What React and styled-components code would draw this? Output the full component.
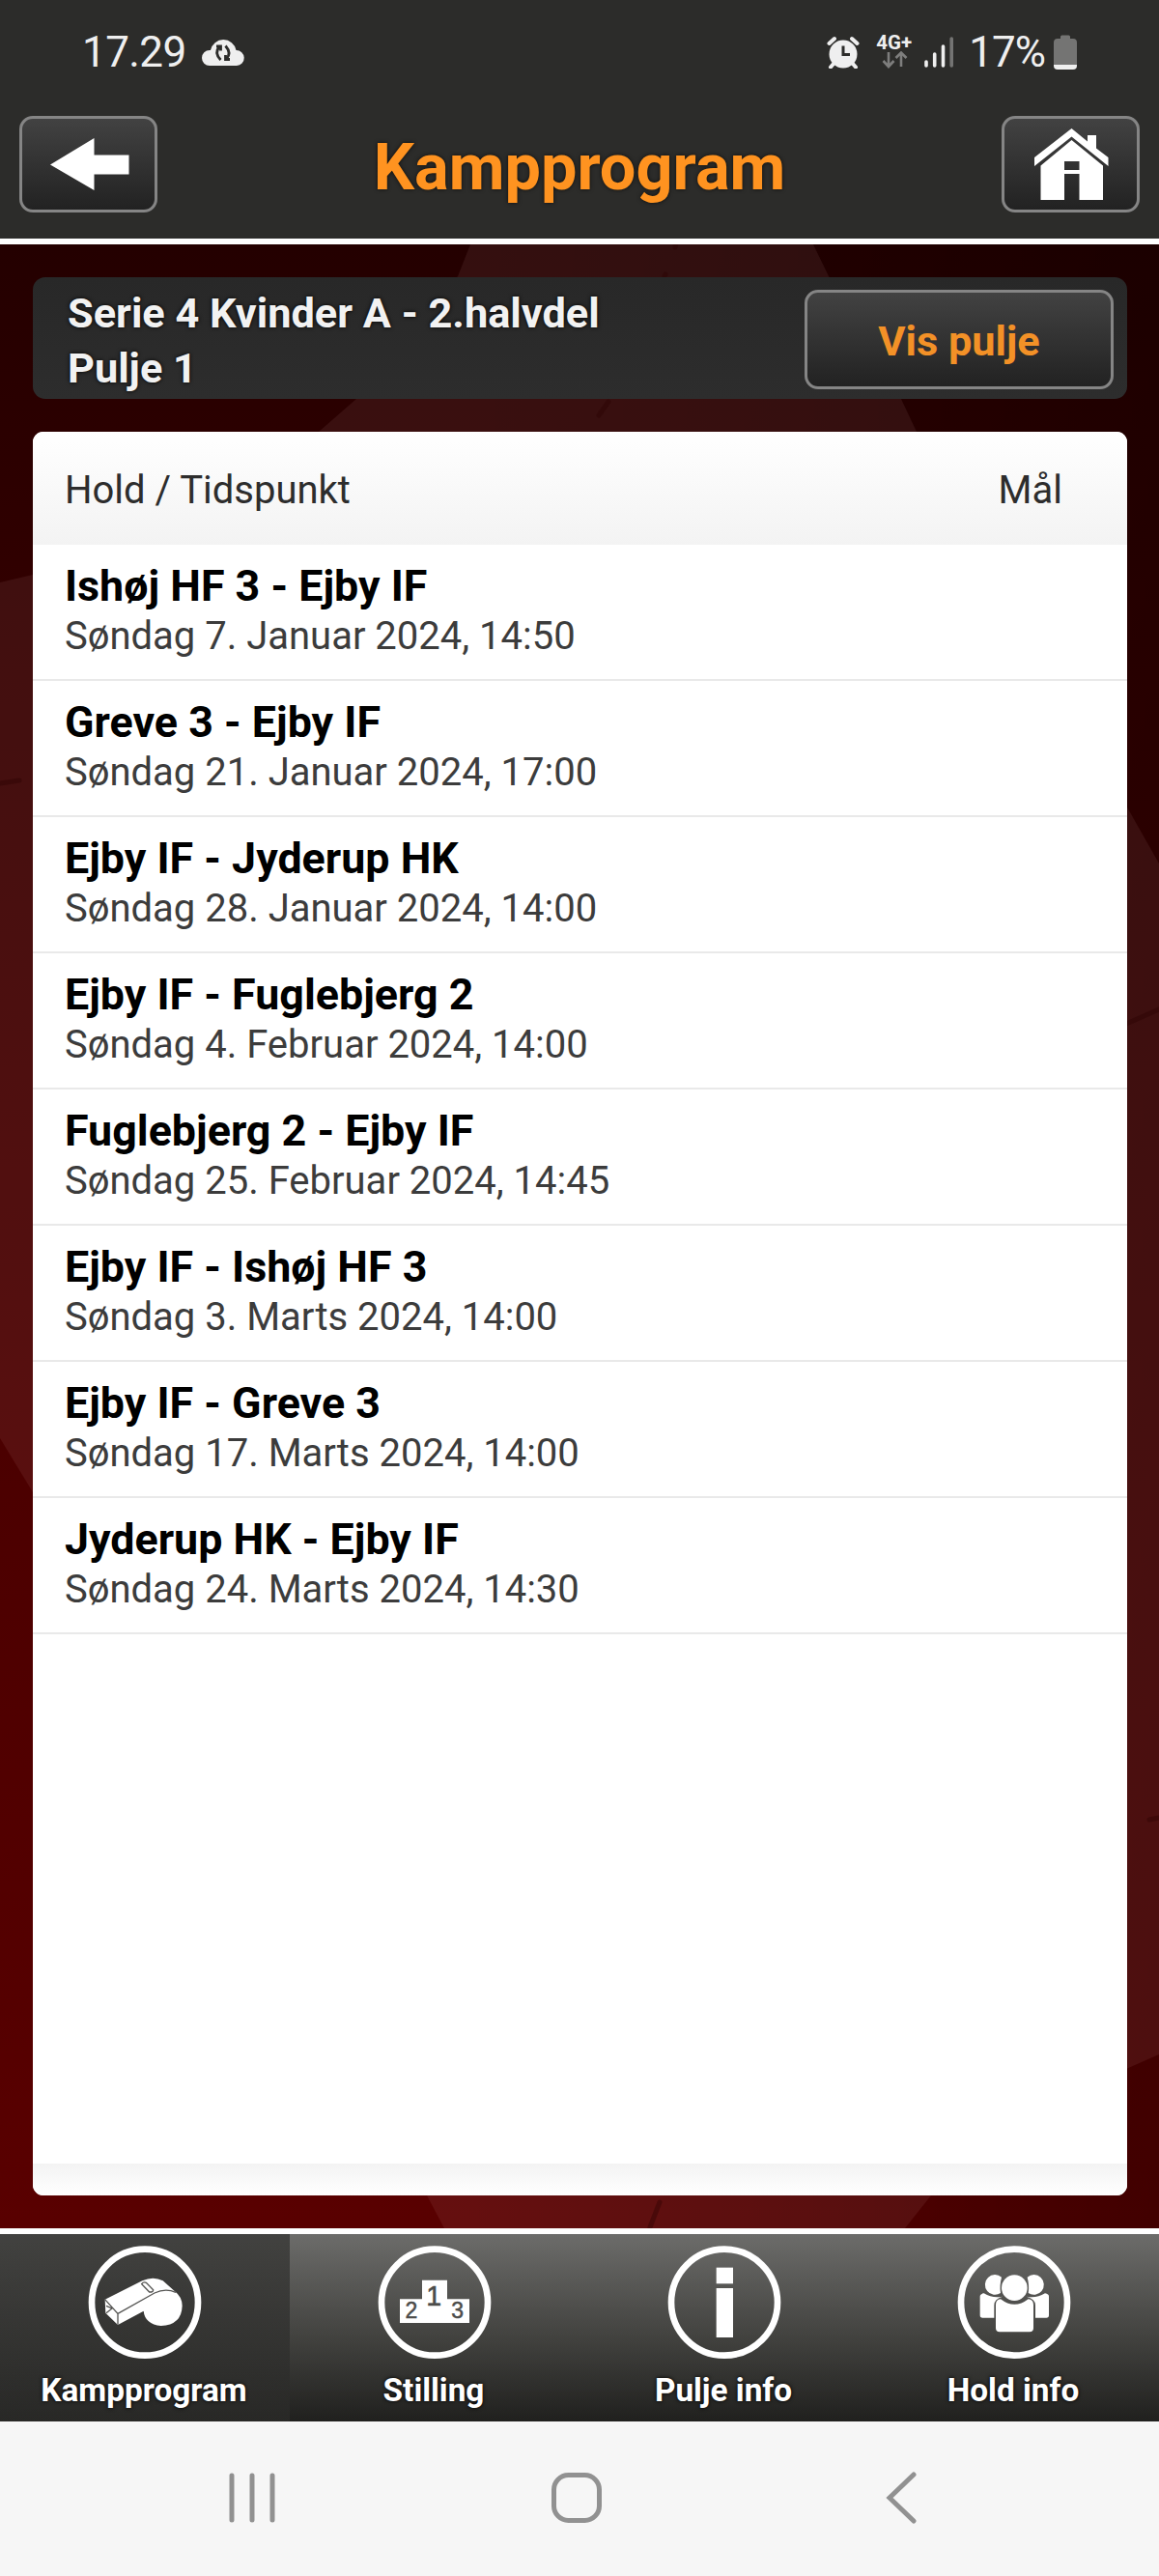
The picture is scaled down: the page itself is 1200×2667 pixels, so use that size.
import styled, { createGlobalStyle } from "styled-components";

const GlobalStyle = createGlobalStyle`
  * {
    box-sizing: border-box;
  }

  body {
    margin: 0;
    background: #f6f6f6;
  }
`;

const Screen = styled.div`
  display: flex;
  flex-direction: column;
  width: 1200px;
  height: 2667px;
  overflow: hidden;
  font-family: Roboto, "Liberation Sans", sans-serif;
`;

const StatusBar = styled.div`
  display: flex;
  align-items: center;
  justify-content: space-between;
  height: 107px;
  padding: 0 85px 0 85px;
  background: #2c2c2a;
  color: #efefef;
`;

const StatusGroup = styled.div`
  display: flex;
  align-items: center;
`;

const StatusText = styled.span`
  font-size: 44px;
  line-height: 52px;
  letter-spacing: ${(props) => props.$spacing || "-0.6px"};
`;

const CloudIcon = styled.svg`
  width: 44px;
  height: 30px;
  margin-left: 16px;
`;

const AlarmIcon = styled.svg`
  width: 34px;
  height: 34px;
  margin-right: 17px;
`;

const NetworkType = styled.div`
  display: flex;
  flex-direction: column;
  align-items: center;
  width: 37px;
  height: 36px;
  margin-right: 13px;
  font-size: 20.5px;
  font-weight: 700;
  line-height: 17px;
`;

const SignalIcon = styled.svg`
  width: 31px;
  height: 34px;
  margin-right: 15px;
`;

const BatteryIcon = styled.svg`
  width: 24px;
  height: 36px;
  margin-left: 9px;
`;

const TopBar = styled.header`
  display: flex;
  justify-content: space-between;
  height: 146px;
  padding: 13px 20px 0;
  background: #2c2c2a;
  border-bottom: 6px solid #fff;
`;

const Title = styled.h1`
  margin: 0;
  color: #ff9320;
  font-size: 66.67px;
  font-weight: 700;
  line-height: 107px;
  text-shadow: 0 0 4px rgba(0, 0, 0, 0.7);
`;

const DarkButton = styled.button`
  display: flex;
  align-items: center;
  justify-content: center;
  width: ${(props) => props.$width};
  height: ${(props) => props.$height};
  padding: ${(props) => props.$padding || "0"};
  background: linear-gradient(#424242, #222);
  border: 3px solid #858585;
  border-radius: 14px;
  color: #f39127;
  font-family: inherit;
  font-size: 43.3px;
  font-weight: 700;
`;

const ButtonIcon = styled.svg`
  width: 100px;
  height: 94px;
`;

const Content = styled.main`
  position: relative;
  display: flex;
  flex-direction: column;
  gap: 34px;
  height: 2054px;
  padding: 34px 33px 34px 34px;
`;

const Backdrop = styled.svg`
  position: absolute;
  inset: 0;
  width: 1200px;
  height: 2054px;
`;

const PoolBar = styled.section`
  position: relative;
  display: flex;
  align-items: center;
  justify-content: space-between;
  height: 126px;
  padding: 2px 14px 0 36px;
  background: linear-gradient(#282828, #2d2d2d);
  border-radius: 13px;
`;

const PoolName = styled.h2`
  margin: 5px 0 0;
  color: #f2f2f2;
  font-size: 43.3px;
  font-weight: 700;
  line-height: 56.6px;
  text-shadow: 0 0 4px #000;
`;

const Panel = styled.section`
  position: relative;
  display: flex;
  flex: 1;
  flex-direction: column;
  background: #fff;
  border-radius: 11px;
  overflow: hidden;
`;

const PanelHeader = styled.div`
  display: flex;
  align-items: center;
  justify-content: space-between;
  height: 117px;
  padding: 3px 67px 0 33px;
  background: linear-gradient(#fff, #f3f3f3);
  color: #2d2d2d;
  font-size: 40px;
`;

const MatchList = styled.ul`
  flex: 1;
  margin: 0;
  padding: 0;
  list-style: none;
`;

const MatchRow = styled.li`
  height: 141px;
  padding: 17px 33px 0;
  border-bottom: 2px solid #e9e9e9;
`;

const Teams = styled.div`
  color: #000;
  font-size: 44.8px;
  font-weight: 700;
  line-height: 52px;
`;

const MatchDate = styled.div`
  color: #3c3c3c;
  font-size: 40px;
  line-height: 52px;
`;

const PanelFooter = styled.div`
  height: 33px;
  background: linear-gradient(#f3f3f3, #fff);
`;

const TabBar = styled.nav`
  display: grid;
  grid-template-columns: repeat(4, 1fr);
  height: 200px;
  border-top: 6px solid #fff;
`;

const Tab = styled.div`
  display: flex;
  flex-direction: column;
  align-items: center;
  padding-top: 11px;
  background: ${(props) =>
    props.$active
      ? "linear-gradient(#424240, #282826)"
      : "linear-gradient(#6c6c6a, #42423f 55%, #20201e)"};
`;

const TabIcon = styled.svg`
  width: 120px;
  height: 120px;
`;

const TabLabel = styled.span`
  margin: 11px 2px 0 0;
  color: #fff;
  font-size: 33.33px;
  font-weight: 700;
  line-height: 40px;
  text-shadow: 0 0 4px #000;
`;

const SystemNav = styled.footer`
  display: grid;
  grid-template-columns: 50px 54px 34px;
  align-items: center;
  column-gap: 284px;
  flex: 1;
  padding: 0 0 2px 236px;
  background: #f6f6f6;
`;

const SystemIcon = styled.svg`
  width: ${(props) => props.$width}px;
  height: 54px;
  margin-left: ${(props) => props.$nudge || 0}px;
  fill: none;
  stroke: #919191;
  stroke-width: 5;
  stroke-linecap: round;
`;

const matches = [
  { teams: "Ishøj HF 3 - Ejby IF", date: "Søndag 7. Januar 2024, 14:50" },
  { teams: "Greve 3 - Ejby IF", date: "Søndag 21. Januar 2024, 17:00" },
  { teams: "Ejby IF - Jyderup HK", date: "Søndag 28. Januar 2024, 14:00" },
  { teams: "Ejby IF - Fuglebjerg 2", date: "Søndag 4. Februar 2024, 14:00" },
  { teams: "Fuglebjerg 2 - Ejby IF", date: "Søndag 25. Februar 2024, 14:45" },
  { teams: "Ejby IF - Ishøj HF 3", date: "Søndag 3. Marts 2024, 14:00" },
  { teams: "Ejby IF - Greve 3", date: "Søndag 17. Marts 2024, 14:00" },
  { teams: "Jyderup HK - Ejby IF", date: "Søndag 24. Marts 2024, 14:30" },
];

const WhistleGlyph = () => (
  <>
    <path
      d="M146 242L262 184Q296 168 326 184L362 216Q386 234 386 262Q384 322 320 324Q270 318 266 278L186 321L148 284Z"
      fill="#fff"
    />
    <g fill="none" stroke="#555553" strokeWidth="4">
      <path d="M146 242L186 286L300 222Q334 206 366 220M186 286V320M150 262L168 270L150 284" />
      <path d="M260 194Q266 186 274 190L296 212Q296 220 284 219Z" />
    </g>
  </>
);

const PodiumGlyph = () => (
  <>
    <path d="M231 182H309V241H378V315H162V241H231Z" fill="#fff" />
    <g
      fill="#4c4c4a"
      stroke="#4c4c4a"
      strokeWidth="1.500"
      fontFamily="Liberation Sans, sans-serif"
      textAnchor="middle"
    >
      <text x="268" y="260" fontSize="86">1</text>
      <text x="198" y="300" fontSize="69">2</text>
      <text x="341" y="300" fontSize="69">3</text>
    </g>
  </>
);

const InfoGlyph = () => (
  <g fill="#fff">
    <rect x="245" y="143" width="52" height="50" />
    <rect x="245" y="207" width="52" height="153" />
  </g>
);

const TeamGlyph = () => (
  <g fill="#fff">
    <path d="M231 173A31 31 0 1 0 228 222Q224 200 231 173Z" />
    <path d="M311 173A31 31 0 1 1 314 222Q318 200 311 173Z" />
    <path d="M176 223Q204 240 234 233Q208 240 208 260V299H172Q164 299 164 291V233Q164 225 176 223Z" />
    <path d="M366 223Q338 240 308 233Q336 240 336 260V299H370Q378 299 378 291V233Q378 225 366 223Z" />
    <circle cx="271" cy="206" r="40" />
    <path d="M228 241Q271 274 314 241Q330 243 330 258V331Q330 343 318 343H225Q213 343 213 331V258Q213 243 228 241Z" />
  </g>
);

const tabs = [
  { label: "Kampprogram", Glyph: WhistleGlyph, active: true },
  { label: "Stilling", Glyph: PodiumGlyph },
  { label: "Pulje info", Glyph: InfoGlyph },
  { label: "Hold info", Glyph: TeamGlyph },
];

function PhoneStatus() {
  return (
    <StatusBar>
      <StatusGroup>
        <StatusText>17.29</StatusText>
        <CloudIcon viewBox="0 0 44 30">
          <path
            d="M8 29A8 8 0 0 1 8 13Q8.500 13 9 13A13.500 13.500 0 0 1 35.500 13A8 8 0 0 1 36 29Z"
            fill="#efefef"
          />
          <g fill="none" stroke="#2c2c2a" strokeWidth="2.800">
            <path d="M19.500 23Q12.500 16 18 9.500M24.500 8.500Q31 16 25.500 22" />
            <path d="M15 9H19.500V13.500M29 22.500H24.500V18" />
          </g>
        </CloudIcon>
      </StatusGroup>
      <StatusGroup>
        <AlarmIcon viewBox="0 0 34 34">
          <circle cx="17" cy="19" r="14.500" fill="#efefef" />
          <path
            d="M2.500 8L8 3M31.500 8L26 3M7 29L4 32.500M27 29L30 32.500"
            stroke="#efefef"
            strokeWidth="4"
            strokeLinecap="round"
          />
          <path d="M17 10.500V19.500H24" fill="none" stroke="#2c2c2a" strokeWidth="3" />
        </AlarmIcon>
        <NetworkType>
          4G+
          <svg width="28" height="18" viewBox="0 0 28 18">
            <path
              d="M8 1V16M2.500 10L8 16L13.500 10M21 16V1M15.500 7L21 1.500L26.500 7"
              fill="none"
              stroke="#7e7e7d"
              strokeWidth="2.600"
            />
          </svg>
        </NetworkType>
        <SignalIcon viewBox="0 0 31 34">
          <g strokeWidth="3.600" strokeLinecap="round" stroke="#efefef">
            <path d="M2 27V31M10.700 19V31M19.500 11V31" />
            <path d="M28.200 3V31" stroke="#747473" />
          </g>
        </SignalIcon>
        <StatusText $spacing="-1px">17%</StatusText>
        <BatteryIcon viewBox="0 0 24 36">
          <path
            d="M7 4V2Q7 0.500 8.500 0.500H15.500Q17 0.500 17 2V4H20Q24 4 24 8V31H0V8Q0 4 4 4Z"
            fill="#747473"
          />
          <path d="M0 31H24V32Q24 36 20 36H4Q0 36 0 32Z" fill="#efefef" />
        </BatteryIcon>
      </StatusGroup>
    </StatusBar>
  );
}

function FootballBackdrop() {
  return (
    <Backdrop viewBox="0 253 1200 2054" preserveAspectRatio="none">
      <defs>
        <linearGradient id="base" x1="0" y1="0" x2="0" y2="1">
          <stop offset="0" stopColor="#240000" />
          <stop offset="0.2" stopColor="#330000" />
          <stop offset="0.6" stopColor="#4b0000" />
          <stop offset="1" stopColor="#590000" />
        </linearGradient>
        <linearGradient id="shade" x1="0" y1="0" x2="1" y2="0">
          <stop offset="0.4" stopColor="#000" stopOpacity="0" />
          <stop offset="1" stopColor="#000" stopOpacity="0.26" />
        </linearGradient>
      </defs>
      <rect y="253" width="1200" height="2054" fill="url(#base)" />
      <rect y="253" width="1200" height="2054" fill="url(#shade)" />
      <g fill="#ffd0d0" fillOpacity="0.075">
        <path d="M487 253L474 286L369 413L330 447L949 447L933 413L858 286L842 253Z" />
        <path d="M0 603L34 595V1545L0 1489Z" />
        <path d="M1166 834L1200 894V2127L1166 2142Z" />
        <path d="M442 2273H964L937 2307H460Z" />
      </g>
      <g fill="none" stroke="#2a0000" strokeWidth="5" strokeOpacity="0.4" strokeLinecap="round">
        <path d="M0 811L20 808M630 416L620 430M700 252L699 256M689 284L688 286" />
        <path d="M1166 1060L1200 1045M1190 1884L1200 1882M683 2280L673 2306" />
      </g>
    </Backdrop>
  );
}

function App() {
  return (
    <Screen>
      <GlobalStyle />
      <PhoneStatus />

      <TopBar>
        <DarkButton $width="143px" $height="100px" aria-label="Tilbage">
          <ButtonIcon viewBox="0 0 100 94">
            <path d="M10 47.500L55.500 20V37.500H91.500V57.500H55.500V74Z" fill="#fff" />
          </ButtonIcon>
        </DarkButton>
        <Title>Kampprogram</Title>
        <DarkButton $width="143px" $height="100px" aria-label="Forside">
          <ButtonIcon viewBox="0 0 100 94">
            <path
              d="M12 40L50.500 10L67 23.500V17H76V30.500L88.500 40V49L50.500 18.500L12 49Z"
              fill="#fff"
            />
            <path
              d="M50.500 22L83 48.500V84H58.500V57H43V84H18.500V48.500ZM43 44H58.500V53H43Z"
              fill="#fff"
              fillRule="evenodd"
            />
          </ButtonIcon>
        </DarkButton>
      </TopBar>

      <Content>
        <FootballBackdrop />
        <PoolBar>
          <PoolName>
            Serie 4 Kvinder A - 2.halvdel
            <br />
            Pulje 1
          </PoolName>
          <DarkButton $width="320px" $height="103px" $padding="4px 0 0">
            Vis pulje
          </DarkButton>
        </PoolBar>

        <Panel>
          <PanelHeader>
            <span>Hold / Tidspunkt</span>
            <span>Mål</span>
          </PanelHeader>
          <MatchList>
            {matches.map((match) => (
              <MatchRow key={match.date}>
                <Teams>{match.teams}</Teams>
                <MatchDate>{match.date}</MatchDate>
              </MatchRow>
            ))}
          </MatchList>
          <PanelFooter />
        </Panel>
      </Content>

      <TabBar>
        {tabs.map(({ label, Glyph, active }) => (
          <Tab key={label} $active={active}>
            <TabIcon viewBox="90 72 360 360">
              <circle cx="270" cy="251" r="165" fill="none" stroke="#fff" strokeWidth="20" />
              <Glyph />
            </TabIcon>
            <TabLabel>{label}</TabLabel>
          </Tab>
        ))}
      </TabBar>

      <SystemNav>
        <SystemIcon $width={50} viewBox="0 0 50 54">
          <path d="M4 4V50M25 4V50M46 4V50" />
        </SystemIcon>
        <SystemIcon $width={54} viewBox="0 0 54 54">
          <rect x="3.500" y="3.500" width="47" height="47" rx="15" />
        </SystemIcon>
        <SystemIcon $width={34} $nudge={8} viewBox="0 0 34 54">
          <path d="M30 3L5 27L30 51" />
        </SystemIcon>
      </SystemNav>
    </Screen>
  );
}

export default App;
